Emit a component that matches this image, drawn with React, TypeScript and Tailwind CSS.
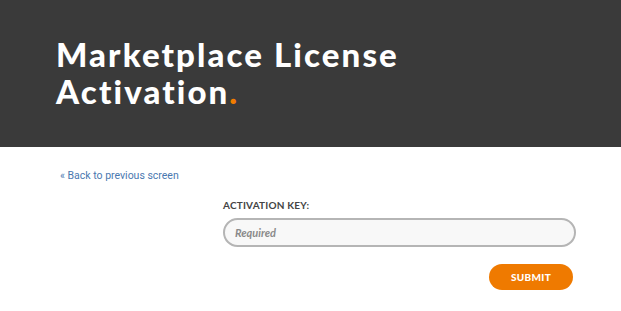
import React from "react";

function App() {
  return (
    <div className="w-[621px] h-[311px] bg-white overflow-hidden font-['Lato',sans-serif]">
      <header className="h-[147px] bg-[#3a3a3a] pl-[56px] pt-[36px]">
        <h1 className="text-white text-[33px] font-black leading-[37px] tracking-[2.1px]">
          Marketplace License
          <br />
          Activation<span className="text-[#f07c00]">.</span>
        </h1>
      </header>

      <div className="pl-[60px] pt-[18px] leading-[15px]">
        <a href="#" className="text-[10.5px] text-[#4a78b0] font-['Roboto',sans-serif]">
          « Back to previous screen
        </a>
      </div>

      <form className="ml-[223px] mt-[15px] w-[353px] flex flex-col">
        <label className="text-[10px] font-bold text-[#444] tracking-[0.2px] uppercase leading-[14px]">
          Activation Key:
        </label>
        <input
          type="text"
          placeholder="Required"
          className="mt-[6px] h-[29px] rounded-full border-2 border-[#b5b5b5] bg-[#f8f8f8] px-[10px] text-[11px] italic font-bold placeholder:text-[#8a8a8a] outline-none"
        />
        <div className="flex justify-end mt-[17px] pr-[3px]">
          <button
            type="button"
            className="w-[84px] h-[26px] rounded-full bg-[#ef7a00] text-white text-[10px] font-black tracking-[0.3px]"
          >
            SUBMIT
          </button>
        </div>
      </form>
    </div>
  );
}

export default App;
